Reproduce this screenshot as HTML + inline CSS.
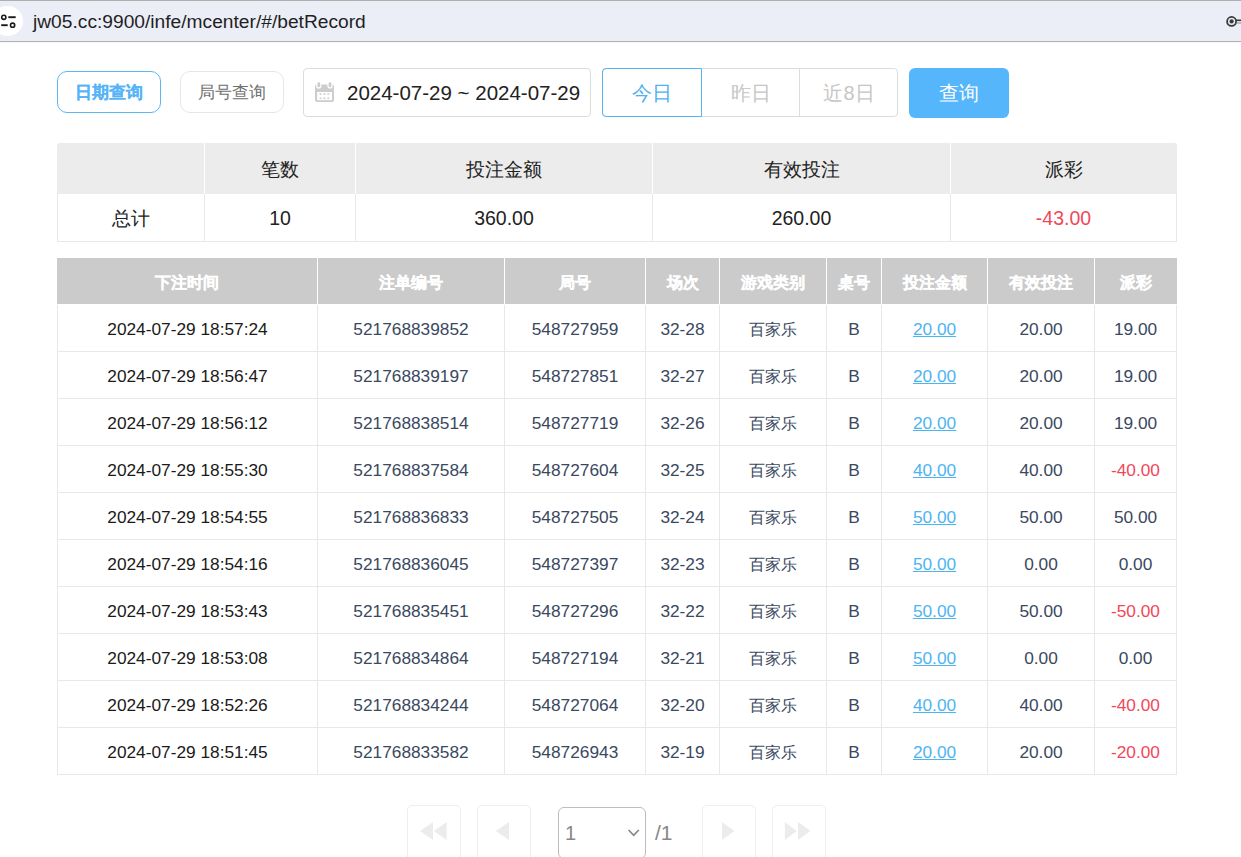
<!DOCTYPE html>
<html><head><meta charset="utf-8">
<style>
*{box-sizing:border-box;margin:0;padding:0}
html,body{width:1241px;height:857px;overflow:hidden;background:#fff;font-family:"Liberation Sans",sans-serif;position:relative}
.abs{position:absolute}
#bar{left:0;top:0;width:1241px;height:42px;background:#ebeef7;border-top:1px solid #b0b0b0;border-bottom:1px solid #b2b2b2;box-shadow:0 1px 0 #f4f6fc}
#tune{left:-7.6px;top:5.6px;width:30.6px;height:30.6px;border-radius:50%;background:#fff}
#url{left:33px;top:10px;font-size:19.2px;color:#1f1f1f;line-height:24px;white-space:nowrap}
.btn{position:absolute;top:71px;height:42px;width:104px;border-radius:10px;text-align:center;line-height:41px;font-size:17px}
#b1{left:57px;border:1px solid #5db6f2;color:#55b4f8;font-weight:bold;font-size:16.6px;-webkit-text-stroke:0.12px #55b4f8}
#b2{left:180px;border:1px solid #e6e6e6;color:#707070;font-size:16.8px}
#date{left:303px;top:68px;width:288px;height:49px;border:1px solid #dcdcdc;border-radius:4px}
#datetxt{left:347px;top:80px;font-size:20.5px;color:#222;line-height:26px;white-space:nowrap}
#tabs{left:602px;top:68px;width:296px;height:49px;border:1px solid #dcdcdc;border-radius:4px}
.tab{position:absolute;top:68px;height:49px;text-align:center;line-height:48px;font-size:20px;color:#c6c6c6}
#t1{left:602px;width:100px;border:1px solid #56b4f4;border-radius:4px 0 0 4px;color:#4fb0f3}
#t2{left:701px;width:99px;line-height:50px}
#t3{left:799px;width:99px;border-left:1px solid #dcdcdc;line-height:50px}
#q{left:909px;top:68px;width:100px;height:50px;border-radius:6px;background:#55b6fb;color:#fff;font-size:20px;text-align:center;line-height:50px}
table{border-collapse:separate;border-spacing:0;position:absolute;table-layout:fixed}
td,th{padding:0;text-align:center;white-space:nowrap}
#sum{left:57px;top:143px;width:1120px}
#sum th{background:#ececec;height:51px;font-weight:normal;font-size:19.2px;color:#222;padding-top:2px;border-left:1px solid #fff;border-bottom:0}
#sum th:first-child{border-left:0;border-top-left-radius:3px}
#sum th:last-child{border-top-right-radius:3px}
#sum td{height:48px;font-size:19.5px;padding-top:2px;color:#222;border-left:1px solid #e8e8e8;border-bottom:1px solid #e8e8e8}
#sum td:last-child{border-right:1px solid #e8e8e8}
#data{left:57px;top:258px;width:1120px}
#data th{background:#cbcbcb;height:47px;font-weight:bold;font-size:16px;padding-top:4px;-webkit-text-stroke:0.3px #fff;color:#fff;border-left:1px solid #fff;border-bottom:1px solid #fff}
#data th:first-child{border-left:0}
#data td{height:47px;font-size:17.3px;padding-top:3px;color:#3a4860;border-left:1px solid #e8e8e8;border-bottom:1px solid #e8e8e8}
#data td:last-child{border-right:1px solid #e8e8e8}
#data td.d{color:#1a1a1a}
.cj{font-size:16px;position:relative;top:0.5px}
.cj2{font-size:18.5px}
.red{color:#f2475a!important}
a{color:#4db4f2;text-decoration:underline}
.pg{position:absolute;top:805px;width:54px;height:60px;border:1.5px solid #eeeeee;border-radius:5px}
#sel{left:558px;top:807px;width:88px;height:52px;border:1.5px solid #bdbdbd;border-radius:6px}
</style></head><body>
<div id="bar" class="abs"></div>
<div id="tune" class="abs"></div>
<svg class="abs" style="left:0;top:0" width="30" height="42" viewBox="0 0 30 42">
<circle cx="3.8" cy="17.3" r="2.1" fill="none" stroke="#1a1a1a" stroke-width="1.6"/>
<line x1="8.3" y1="17.2" x2="15.7" y2="17.2" stroke="#1a1a1a" stroke-width="1.9"/>
<line x1="1.2" y1="25.2" x2="7.7" y2="25.2" stroke="#1a1a1a" stroke-width="1.9"/>
<circle cx="12.6" cy="25.2" r="2.1" fill="none" stroke="#1a1a1a" stroke-width="1.6"/>
</svg>
<svg class="abs" style="left:1220px;top:10px" width="21" height="22" viewBox="1220 10 21 22">
<circle cx="1231.6" cy="21.45" r="4.5" fill="none" stroke="#3a3a3a" stroke-width="1.8"/>
<circle cx="1231.6" cy="21.45" r="2.1" fill="#3a3a3a"/>
<path d="M1236 20.3 H1242" stroke="#3a3a3a" stroke-width="1.6" fill="none"/>
<path d="M1236.5 23 H1242" stroke="#9a9a9a" stroke-width="1.2" fill="none"/>
</svg>
<div id="url" class="abs">jw05.cc:9900/infe/mcenter/#/betRecord</div>

<div id="b1" class="btn">日期查询</div>
<div id="b2" class="btn">局号查询</div>
<div id="date" class="abs"></div>
<svg class="abs" style="left:308px;top:76px" width="32" height="32" viewBox="308 76 32 32">
<rect x="315" y="84.6" width="19" height="17.4" rx="2" fill="#cdcdcd"/>
<rect x="317.2" y="92" width="14.8" height="8.2" fill="#fff"/>
<rect x="316.2" y="81" width="5.2" height="7.6" rx="2.6" fill="#fff"/>
<rect x="327.4" y="81" width="5.2" height="7.6" rx="2.6" fill="#fff"/>
<rect x="317.4" y="82.3" width="2.8" height="5" rx="1.4" fill="#cdcdcd"/>
<rect x="328.6" y="82.3" width="2.8" height="5" rx="1.4" fill="#cdcdcd"/>
<g fill="#d3d3d3"><rect x="319.5" y="93.2" width="2" height="1.8"/><rect x="323.4" y="93.2" width="2" height="1.8"/><rect x="327.3" y="93.2" width="2" height="1.8"/>
<rect x="319.5" y="97.4" width="2" height="1.8"/><rect x="323.4" y="97.4" width="2" height="1.8"/><rect x="327.3" y="97.4" width="2" height="1.8"/></g>
</svg>
<div id="datetxt" class="abs">2024-07-29 ~ 2024-07-29</div>
<div id="tabs" class="abs"></div>
<div id="t2" class="tab">昨日</div>
<div id="t3" class="tab">近8日</div>
<div id="t1" class="tab">今日</div>
<div id="q" class="abs">查询</div>

<table id="sum">
<colgroup><col style="width:147px"><col style="width:151px"><col style="width:297px"><col style="width:298px"><col style="width:227px"></colgroup>
<tr><th></th><th>笔数</th><th>投注金额</th><th>有效投注</th><th>派彩</th></tr>
<tr><td><span class="cj2">总计</span></td><td>10</td><td>360.00</td><td>260.00</td><td class="red">-43.00</td></tr>
</table>

<table id="data">
<colgroup><col style="width:260px"><col style="width:187px"><col style="width:141px"><col style="width:74px"><col style="width:107px"><col style="width:55px"><col style="width:106px"><col style="width:107px"><col style="width:83px"></colgroup>
<tr><th>下注时间</th><th>注单编号</th><th>局号</th><th>场次</th><th>游戏类别</th><th>桌号</th><th>投注金额</th><th>有效投注</th><th>派彩</th></tr>
<tr><td class="d">2024-07-29 18:57:24</td><td>521768839852</td><td>548727959</td><td>32-28</td><td><span class="cj">百家乐</span></td><td>B</td><td><a>20.00</a></td><td>20.00</td><td>19.00</td></tr>
<tr><td class="d">2024-07-29 18:56:47</td><td>521768839197</td><td>548727851</td><td>32-27</td><td><span class="cj">百家乐</span></td><td>B</td><td><a>20.00</a></td><td>20.00</td><td>19.00</td></tr>
<tr><td class="d">2024-07-29 18:56:12</td><td>521768838514</td><td>548727719</td><td>32-26</td><td><span class="cj">百家乐</span></td><td>B</td><td><a>20.00</a></td><td>20.00</td><td>19.00</td></tr>
<tr><td class="d">2024-07-29 18:55:30</td><td>521768837584</td><td>548727604</td><td>32-25</td><td><span class="cj">百家乐</span></td><td>B</td><td><a>40.00</a></td><td>40.00</td><td class="red">-40.00</td></tr>
<tr><td class="d">2024-07-29 18:54:55</td><td>521768836833</td><td>548727505</td><td>32-24</td><td><span class="cj">百家乐</span></td><td>B</td><td><a>50.00</a></td><td>50.00</td><td>50.00</td></tr>
<tr><td class="d">2024-07-29 18:54:16</td><td>521768836045</td><td>548727397</td><td>32-23</td><td><span class="cj">百家乐</span></td><td>B</td><td><a>50.00</a></td><td>0.00</td><td>0.00</td></tr>
<tr><td class="d">2024-07-29 18:53:43</td><td>521768835451</td><td>548727296</td><td>32-22</td><td><span class="cj">百家乐</span></td><td>B</td><td><a>50.00</a></td><td>50.00</td><td class="red">-50.00</td></tr>
<tr><td class="d">2024-07-29 18:53:08</td><td>521768834864</td><td>548727194</td><td>32-21</td><td><span class="cj">百家乐</span></td><td>B</td><td><a>50.00</a></td><td>0.00</td><td>0.00</td></tr>
<tr><td class="d">2024-07-29 18:52:26</td><td>521768834244</td><td>548727064</td><td>32-20</td><td><span class="cj">百家乐</span></td><td>B</td><td><a>40.00</a></td><td>40.00</td><td class="red">-40.00</td></tr>
<tr><td class="d">2024-07-29 18:51:45</td><td>521768833582</td><td>548726943</td><td>32-19</td><td><span class="cj">百家乐</span></td><td>B</td><td><a>20.00</a></td><td>20.00</td><td class="red">-20.00</td></tr>
</table>

<div class="pg" style="left:407px"></div>
<div class="pg" style="left:477px"></div>
<div id="sel" class="abs"></div>
<div class="abs" style="left:565px;top:819px;font-size:20px;line-height:28px;color:#888">1</div>
<svg class="abs" style="left:620px;top:820px" width="26" height="24" viewBox="620 820 26 24"><path d="M628.6 830 L633.7 835.3 L638.8 830" fill="none" stroke="#888" stroke-width="1.7"/></svg>
<div class="abs" style="left:655px;top:819px;font-size:21px;line-height:28px;color:#888">/1</div>
<div class="pg" style="left:702px"></div>
<div class="pg" style="left:772px"></div>
<svg class="abs" style="left:400px;top:800px" width="440" height="57" viewBox="400 800 440 57">
<g fill="#ececec">
<path d="M420 831 L433 822 L433 840 Z"/><path d="M433.8 831 L446.7 822 L446.7 840 Z"/>
<path d="M495.7 831 L509 822 L509 840 Z"/>
<path d="M734.5 831 L722 822 L722 840 Z"/>
<path d="M796.8 831 L784.8 822 L784.8 840 Z"/><path d="M810.5 831 L798 822 L798 840 Z"/>
</g></svg>
</body></html>
